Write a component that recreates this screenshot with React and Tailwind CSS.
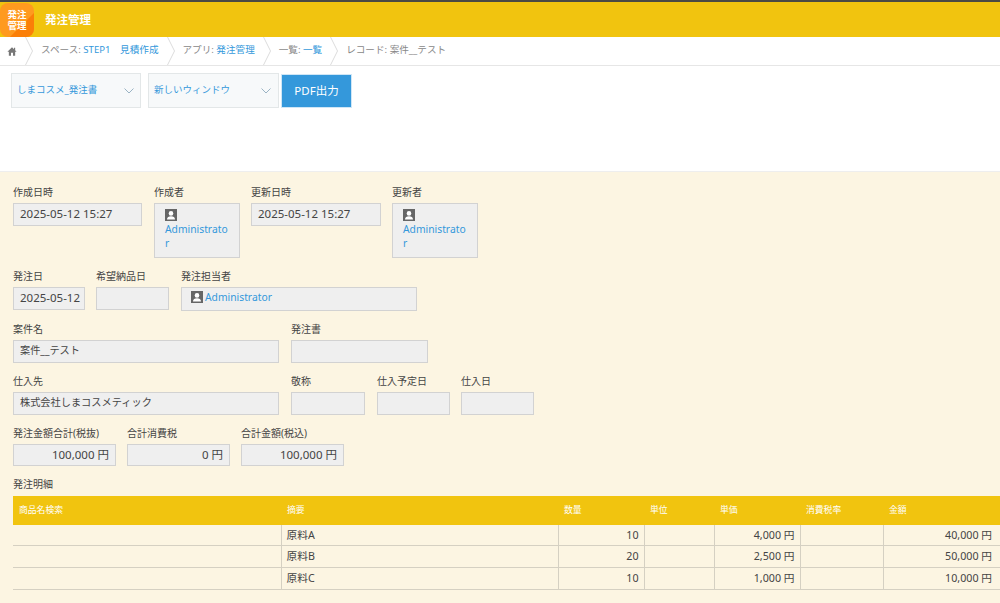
import React from 'react';

const FONT = "font-['Noto_Sans','Noto_Sans_CJK_JP',sans-serif]";

const UserIcon = () => (
  <svg viewBox="0 0 12 12" className="w-[12px] h-[12px] shrink-0">
    <rect width="12" height="12" fill="#666" />
    <circle cx="6" cy="4.4" r="2.3" fill="#fff" />
    <path d="M2 10.4c0-2.2 1.6-3.2 4-3.2s4 1 4 3.2z" fill="#fff" />
  </svg>
);

const Crumb = () => (
  <svg viewBox="0 0 9 28" className="w-[9px] h-[28px] shrink-0 ml-[8px] mr-[7px]" fill="none" stroke="#dcdcdc">
    <path d="M0.5 0l7 14-7 14" />
  </svg>
);

const Chevron = () => (
  <svg viewBox="0 0 10 6" className="w-[10px] h-[6px]" fill="none" stroke="#9ab3c4" strokeWidth="1">
    <path d="M0.5 0.5L5 5l4.5-4.5" />
  </svg>
);

// read-only kintone style field: label on top, grey box below
const Field = ({ label, className, children, align = 'left' }) => (
  <div className="flex flex-col shrink-0">
    <div className="h-[22px] text-[10px] text-[#444] leading-[22px] whitespace-nowrap">{label}</div>
    <div className={`bg-[#efefef] border border-[#d2d2d2] text-[11.5px] text-[#444] px-[6px] pt-[1px] ${align === 'right' ? 'text-right' : ''} ${className}`}>
      {children}
    </div>
  </div>
);

const UserField = ({ label }) => (
  <Field label={label} className="w-[86px] h-[55px] break-all !px-[10px]">
    <div className="pt-[4px]"><UserIcon /></div>
    <div className="text-[#3498db] text-[10.3px] leading-[14px] mt-[1px]">Administrator</div>
  </Field>
);

const Row = ({ className = '', children }) => <div className={`flex ${className}`}>{children}</div>;

const lines = [
  { name: '原料A', qty: '10', price: '4,000 円', total: '40,000 円', height: 'h-[20px]' },
  { name: '原料B', qty: '20', price: '2,500 円', total: '50,000 円', height: 'h-[22px]' },
  { name: '原料C', qty: '10', price: '1,000 円', total: '10,000 円', height: 'h-[22px]' },
];

export default function App() {
  return (
    <div className={`${FONT} w-[1000px] h-[603px] overflow-hidden bg-[#fcf5e2] flex flex-col`}>
      {/* header */}
      <div className="h-[2px] bg-[#4a4a44]" />
      <div className="h-[35px] bg-[#f1c40f] flex items-center">
        <div className="relative w-[34px] h-[34px] mt-[1px] bg-[#ff9a1f] rounded-[8px] overflow-hidden flex items-center justify-center">
          <div className="absolute left-[17px] top-[17px] w-[34px] h-[34px] bg-[#fb7f08] rotate-45" />
          <div className="relative text-white text-[9.5px] leading-[11px] font-bold text-center">発注<br />管理</div>
        </div>
        <div className="ml-[11px] text-white text-[11.5px] font-bold">発注管理</div>
      </div>

      {/* breadcrumb */}
      <div className="h-[29px] bg-white border-b border-[#e6e6e6] flex items-center text-[9.6px] text-[#888] whitespace-nowrap">
        <svg viewBox="0 0 12 12" className="w-[10px] h-[11px] ml-[7px]" fill="#777">
          <path d="M6 1L0.5 6.2h1.7V11h2.6V7.6h2.4V11h2.6V6.2h1.7L9.8 4.6V1.6H8.4v1.7z" />
        </svg>
        <Crumb />
        <span className="pb-[2px]">スペース: <span className="text-[#3498db]">STEP1　見積作成</span></span>
        <Crumb />
        <span className="pb-[2px]">アプリ: <span className="text-[#3498db]">発注管理</span></span>
        <Crumb />
        <span className="pb-[2px]">一覧: <span className="text-[#3498db]">一覧</span></span>
        <Crumb />
        <span className="pb-[2px]">レコード: 案件__テスト</span>
      </div>

      {/* toolbar */}
      <div className="h-[106px] bg-white border-b border-[#eeeeee] flex items-start pl-[11px] pt-[7px]">
        <div className="w-[130px] h-[35px] bg-[#f7f9fa] border border-[#e3e7e8] flex items-center justify-between pl-[5px] pr-[6px] text-[9.5px] text-[#3498db] mr-[7px]">
          <span>しまコスメ_発注書</span>
          <Chevron />
        </div>
        <div className="w-[131px] h-[35px] bg-[#f7f9fa] border border-[#e3e7e8] flex items-center justify-between pl-[5px] pr-[7px] text-[9.5px] text-[#3498db] mr-[2px]">
          <span>新しいウィンドウ</span>
          <Chevron />
        </div>
        <button type="button" className="w-[71px] h-[34px] mt-[1px] bg-[#3498db] text-white text-[11.5px] border border-[#cfe6f6]">PDF出力</button>
      </div>

      {/* form */}
      <div className="pl-[13px] pt-[9px] flex flex-col gap-[7px]">
        <Row>
          <Field label="作成日時" className="w-[129px] h-[23px] whitespace-nowrap">2025-05-12 15:27</Field>
          <div className="ml-[12px]"><UserField label="作成者" /></div>
          <div className="ml-[11px]">
            <Field label="更新日時" className="w-[130px] h-[23px] whitespace-nowrap">2025-05-12 15:27</Field>
          </div>
          <div className="ml-[11px]"><UserField label="更新者" /></div>
        </Row>
        <Row>
          <Field label="発注日" className="w-[72px] h-[23px] whitespace-nowrap">2025-05-12</Field>
          <div className="ml-[11px]"><Field label="希望納品日" className="w-[73px] h-[23px]" /></div>
          <div className="ml-[12px]">
            <Field label="発注担当者" className="w-[236px] h-[24px] !pl-[9px]">
              <div className="flex items-center gap-[2px] pt-[2px]">
                <UserIcon />
                <span className="text-[#3498db] text-[10.3px] leading-[10px]">Administrator</span>
              </div>
            </Field>
          </div>
        </Row>
        <Row>
          <Field label="案件名" className="w-[266px] h-[23px] !text-[10.2px] !pt-[2px]">案件__テスト</Field>
          <div className="ml-[12px]"><Field label="発注書" className="w-[137px] h-[23px]" /></div>
        </Row>
        <Row>
          <Field label="仕入先" className="w-[266px] h-[23px] !text-[10.2px] !pt-[2px]">株式会社しまコスメティック</Field>
          <div className="ml-[12px]"><Field label="敬称" className="w-[74px] h-[23px]" /></div>
          <div className="ml-[12px]"><Field label="仕入予定日" className="w-[73px] h-[23px]" /></div>
          <div className="ml-[11px]"><Field label="仕入日" className="w-[73px] h-[23px]" /></div>
        </Row>
        <Row>
          <Field label="発注金額合計(税抜)" className="w-[103px] h-[22px]" align="right">100,000 円</Field>
          <div className="ml-[11px]"><Field label="合計消費税" className="w-[103px] h-[22px]" align="right">0 円</Field></div>
          <div className="ml-[11px]"><Field label="合計金額(税込)" className="w-[103px] h-[22px]" align="right">100,000 円</Field></div>
        </Row>

        <div>
          <div className="h-[23px] text-[10px] leading-[22px] text-[#444]">発注明細</div>
          <table className="table-fixed border-collapse w-[987px] text-[10.7px] text-[#444]">
            <colgroup>
              <col className="w-[268px]" />
              <col className="w-[277px]" />
              <col className="w-[86px]" />
              <col className="w-[70px]" />
              <col className="w-[86px]" />
              <col className="w-[83px]" />
              <col className="w-[117px]" />
            </colgroup>
            <thead>
              <tr className="h-[29px] bg-[#f1c40f] text-white text-[8.8px] text-left">
                {['商品名検索', '摘要', '数量', '単位', '単価', '消費税率', '金額'].map((h) => (
                  <th key={h} className="font-normal px-[6px] py-0">{h}</th>
                ))}
              </tr>
            </thead>
            <tbody>
              {lines.map((l) => (
                <tr key={l.name} className={`${l.height} border-b border-[#d5d0c2]`}>
                  <td className="p-0" />
                  <td className="border-l border-[#d5d0c2] px-[5px] py-0">{l.name}</td>
                  <td className="border-l border-[#d5d0c2] px-[5px] py-0 text-right">{l.qty}</td>
                  <td className="border-l border-[#d5d0c2] p-0" />
                  <td className="border-l border-[#d5d0c2] px-[5px] py-0 text-right">{l.price}</td>
                  <td className="border-l border-[#d5d0c2] p-0" />
                  <td className="border-l border-[#d5d0c2] pl-[5px] pr-[8px] py-0 text-right">{l.total}</td>
                </tr>
              ))}
            </tbody>
          </table>
        </div>
      </div>
    </div>
  );
}
